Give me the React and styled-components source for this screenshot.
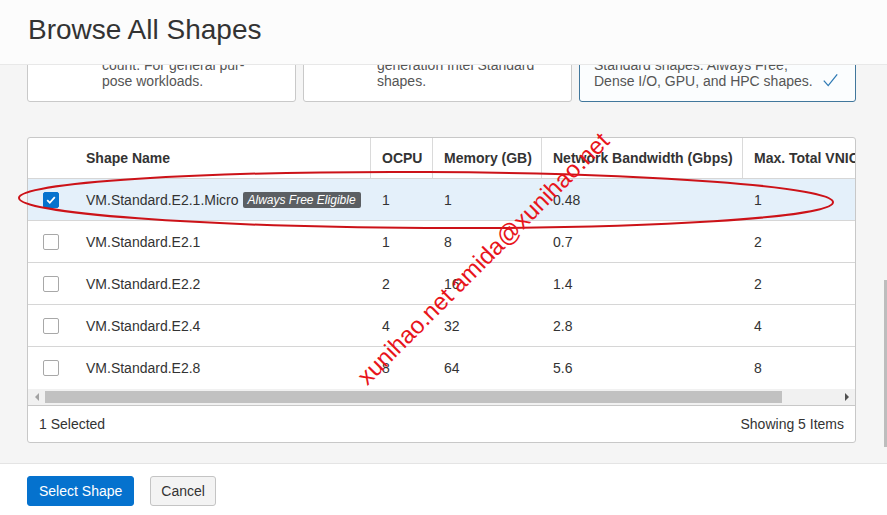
import React from "react";
import styled, { createGlobalStyle } from "styled-components";

const GlobalStyle = createGlobalStyle`
  html, body { margin: 0; padding: 0; }
  body {
    font-family: "Liberation Sans", Arial, sans-serif;
    color: #333;
    background: #fff;
    overflow: hidden;
  }
  * { box-sizing: border-box; }
`;

const COLS = "46px 296px 62px 109px 201px 180px";

const Page = styled.div`
  position: relative;
  width: 887px;
  height: 515px;
  display: flex;
  flex-direction: column;
  overflow: hidden;
`;

const Header = styled.header`
  position: relative;
  z-index: 1;
  flex: none;
  height: 65px;
  padding: 14px 0 0 28px;
  background: #fcfcfc;
  border-bottom: 1px solid #e8e8e8;
`;

const Title = styled.h1`
  margin: 0;
  font-size: 28px;
  line-height: 32px;
  font-weight: normal;
  color: #333;
`;

const Body = styled.main`
  position: relative;
  flex: 1;
  min-height: 0;
  overflow: hidden;
  background: #f5f5f5;
  padding: 0 32px 0 27px;
`;

const CardRow = styled.div`
  display: grid;
  grid-template-columns: 269px 269px 277px;
  column-gap: 7px;
  margin-top: -10px;
`;

const Card = styled.div`
  height: 47px;
  display: flex;
  align-items: flex-end;
  padding: 0 17px 12px ${(p) => p.$indent}px;
  background: ${(p) => (p.$selected ? "#fbfdfe" : "#fff")};
  border: 1px solid ${(p) => (p.$selected ? "#41779c" : "#c9c9c9")};
  border-radius: 3px;
`;

const CardText = styled.div`
  font-size: 14px;
  line-height: 16px;
  color: #555;
  white-space: nowrap;
`;

const CheckMark = styled.svg`
  flex: none;
  margin-left: auto;
  margin-bottom: 1px;
`;

const Panel = styled.section`
  margin-top: 35px;
  width: 829px;
  background: #fff;
  border: 1px solid #c8c8c8;
  border-radius: 3px;
  overflow: hidden;
`;

const Viewport = styled.div`
  overflow: hidden;
`;

const Grid = styled.div`
  width: 894px;
`;

const HeadRow = styled.div`
  display: grid;
  grid-template-columns: ${COLS};
  height: 41px;
  border-bottom: 1px solid #d6d6d6;
`;

const HeadCell = styled.div`
  display: flex;
  align-items: center;
  padding-left: ${(p) => (p.$divider ? 11 : 12)}px;
  border-left: ${(p) => (p.$divider ? "1px solid #dadada" : "none")};
  font-size: 14px;
  font-weight: bold;
  color: #333;
  white-space: nowrap;
`;

const Row = styled.div`
  display: grid;
  grid-template-columns: ${COLS};
  height: 42px;
  background: ${(p) => (p.$selected ? "#e4f0fa" : "#fff")};
  &:not(:last-child) {
    border-bottom: 1px solid #d6d6d6;
  }
`;

const Cell = styled.div`
  display: flex;
  align-items: center;
  padding-left: ${(p) => (p.$check ? 15 : 12)}px;
  font-size: 14px;
  color: #333;
  white-space: nowrap;
`;

const Box = styled.span`
  display: inline-flex;
  align-items: center;
  justify-content: center;
  width: 16px;
  height: 16px;
  border-radius: 2px;
  background: ${(p) => (p.$checked ? "#0572ce" : "#fff")};
  border: 1px solid ${(p) => (p.$checked ? "#0572ce" : "#a8a8a8")};
`;

const Badge = styled.span`
  margin-left: 4px;
  padding: 0 5px;
  height: 16px;
  line-height: 16px;
  border-radius: 2px;
  background: #5b5f63;
  color: #fff;
  font-size: 12px;
  font-style: italic;
`;

const HScroll = styled.div`
  display: flex;
  align-items: center;
  height: 17px;
  background: #f1f1f1;
  border-bottom: 1px solid #c8c8c8;
`;

const Arrow = styled.span`
  flex: none;
  width: 17px;
  height: 16px;
  display: flex;
  align-items: center;
  justify-content: center;
  &::before {
    content: "";
    border-top: 4px solid transparent;
    border-bottom: 4px solid transparent;
    ${(p) =>
      p.$dir === "left"
        ? "border-right: 4px solid #a3a3a3;"
        : "border-left: 4px solid #505050;"}
  }
`;

const Thumb = styled.span`
  flex: none;
  width: 737px;
  height: 12px;
  background: #c1c1c1;
`;

const Track = styled.span`
  flex: 1;
`;

const PanelFooter = styled.div`
  display: flex;
  align-items: center;
  justify-content: space-between;
  height: 36px;
  padding: 0 11px;
  font-size: 14px;
  color: #333;
`;

const PageScrollThumb = styled.div`
  position: absolute;
  right: 0;
  top: 215px;
  width: 3px;
  height: 167px;
  background: #bdbdbd;
`;

const Footer = styled.footer`
  flex: none;
  height: 52px;
  display: flex;
  align-items: flex-start;
  gap: 16px;
  padding: 12px 0 0 27px;
  background: #fff;
  border-top: 1px solid #e4e4e4;
`;

const Button = styled.button`
  height: 30px;
  padding: 0 ${(p) => (p.$primary ? 11 : 10)}px;
  border-radius: 3px;
  font-family: "Liberation Sans", Arial, sans-serif;
  font-size: 14px;
  cursor: pointer;
  background: ${(p) => (p.$primary ? "#0572ce" : "#f3f3f3")};
  color: ${(p) => (p.$primary ? "#fff" : "#333")};
  border: 1px solid ${(p) => (p.$primary ? "#0572ce" : "#c4c4c4")};
`;

const Annotations = styled.div`
  position: absolute;
  inset: 0;
  z-index: 2;
  pointer-events: none;
`;

const Ellipse = styled.svg`
  position: absolute;
  left: 0;
  top: 0;
`;

const Stamp = styled.span`
  position: absolute;
  left: 353px;
  top: 372px;
  transform-origin: 0 0;
  transform: rotate(-45deg);
  font-family: "Liberation Sans", Arial, sans-serif;
  font-size: 24px;
  line-height: 24px;
  color: #e8141b;
  white-space: nowrap;
`;

const cards = [
  { indent: 74, lines: ["count. For general pur-", "pose workloads."] },
  { indent: 73, lines: ["generation Intel Standard", "shapes."] },
  { indent: 14, lines: ["Standard shapes. Always Free,", "Dense I/O, GPU, and HPC shapes."], selected: true },
];

const headers = ["OCPU", "Memory (GB)", "Network Bandwidth (Gbps)", "Max. Total VNICs"];

const rows = [
  { name: "VM.Standard.E2.1.Micro", free: true, ocpu: "1", mem: "1", net: "0.48", vnic: "1", selected: true },
  { name: "VM.Standard.E2.1", ocpu: "1", mem: "8", net: "0.7", vnic: "2" },
  { name: "VM.Standard.E2.2", ocpu: "2", mem: "16", net: "1.4", vnic: "2" },
  { name: "VM.Standard.E2.4", ocpu: "4", mem: "32", net: "2.8", vnic: "4" },
  { name: "VM.Standard.E2.8", ocpu: "8", mem: "64", net: "5.6", vnic: "8" },
];

function Checkbox({ checked }) {
  return (
    <Box $checked={checked}>
      {checked && (
        <svg width="12" height="12" viewBox="0 0 12 12">
          <path d="M2.2 6.2 L4.8 8.8 L9.8 3.2" fill="none" stroke="#fff" strokeWidth="1.8" />
        </svg>
      )}
    </Box>
  );
}

export default function App() {
  return (
    <Page>
      <GlobalStyle />
      <Header>
        <Title>Browse All Shapes</Title>
      </Header>
      <Body>
        <CardRow>
          {cards.map((c, i) => (
            <Card key={i} $indent={c.indent} $selected={c.selected}>
              <CardText>
                {c.lines.map((l) => (
                  <div key={l}>{l}</div>
                ))}
              </CardText>
              {c.selected && (
                <CheckMark width="15" height="15" viewBox="0 0 15 15">
                  <path d="M0.8 7.6 L5.2 12.6 L14.2 1.4" fill="none" stroke="#2f7ab4" strokeWidth="1.3" />
                </CheckMark>
              )}
            </Card>
          ))}
        </CardRow>

        <Panel>
          <Viewport>
            <Grid>
              <HeadRow>
                <HeadCell />
                <HeadCell>Shape Name</HeadCell>
                {headers.map((h) => (
                  <HeadCell key={h} $divider>
                    {h}
                  </HeadCell>
                ))}
              </HeadRow>
              {rows.map((r) => (
                <Row key={r.name} $selected={r.selected}>
                  <Cell $check>
                    <Checkbox checked={r.selected} />
                  </Cell>
                  <Cell>
                    {r.name}
                    {r.free && <Badge>Always Free Eligible</Badge>}
                  </Cell>
                  <Cell>{r.ocpu}</Cell>
                  <Cell>{r.mem}</Cell>
                  <Cell>{r.net}</Cell>
                  <Cell>{r.vnic}</Cell>
                </Row>
              ))}
            </Grid>
          </Viewport>
          <HScroll>
            <Arrow $dir="left" />
            <Thumb />
            <Track />
            <Arrow $dir="right" />
          </HScroll>
          <PanelFooter>
            <span>1 Selected</span>
            <span>Showing 5 Items</span>
          </PanelFooter>
        </Panel>
        <PageScrollThumb />
      </Body>
      <Footer>
        <Button $primary>Select Shape</Button>
        <Button>Cancel</Button>
      </Footer>

      <Annotations>
        <Ellipse width="887" height="515" viewBox="0 0 887 515">
          <ellipse
            cx="426"
            cy="200"
            rx="407"
            ry="28"
            transform="rotate(0.3 426 200)"
            fill="none"
            stroke="#cc1218"
            strokeWidth="2"
          />
        </Ellipse>
        <Stamp>xunihao.net amida@xunihao.net</Stamp>
      </Annotations>
    </Page>
  );
}
